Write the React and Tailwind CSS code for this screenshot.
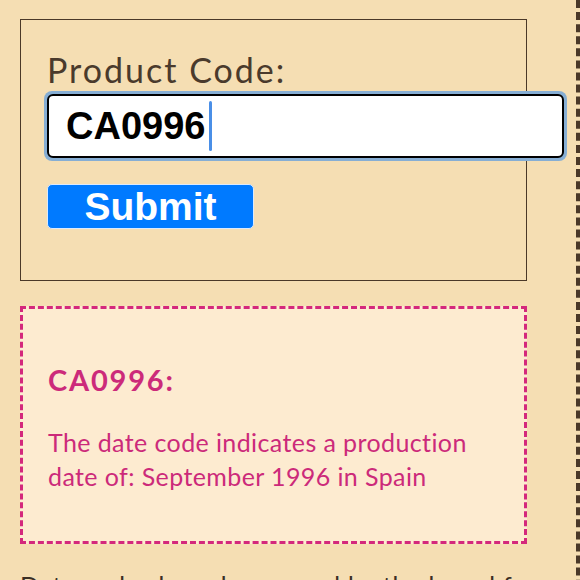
import React, { useState } from 'react';

const App = () => {
  const [code, setCode] = useState('CA0996');

  return (
    <div className="min-h-screen w-[580px] overflow-hidden bg-[#f5deb3] border-r-4 border-dashed border-[#4a3828] pl-5 pt-[19px] font-['Lato',sans-serif]">
      {/* Lookup form */}
      <div className="w-[507px] h-[262px] border border-[#4a3828] pl-[26px] pt-[30px]">
        <label className="block text-[34px] leading-[40px] tracking-[2px] text-[#4a3a2c]">Product Code:</label>
        <div className="relative mt-[1px] -ml-[3px] w-[523px] rounded-[8px] bg-[#86aed4] p-[3px]">
          <input
            value={code}
            onChange={(e) => setCode(e.target.value)}
            className="block w-full h-[64px] rounded-[6px] border-2 border-black bg-white pl-[17px] text-[38px] font-bold text-black outline-none caret-[#3b82f6] font-['Liberation_Sans',Arial,sans-serif]"
          />
          {/* text caret */}
          <span className="pointer-events-none absolute left-[165px] top-[10px] h-[50px] w-[3px] rounded-full bg-[#4a8fe7]" />
        </div>
        <button className="mt-[23px] flex items-center justify-center w-[207px] h-[45px] rounded-[5px] border border-[#dbeafe] bg-[#007aff] text-white text-[39px] font-bold leading-none font-['Liberation_Sans',Arial,sans-serif]">
          Submit
        </button>
      </div>

      {/* Result */}
      <div className="mt-[25px] w-[507px] h-[238px] border-[3px] border-dashed border-[#d4287c] bg-[#fdebd0] pl-[25px] pr-[30px] pt-[54px] text-[#cc2a7a]">
        <h3 className="text-[29px] font-bold leading-[34px] tracking-[1.8px]">CA0996:</h3>
        <p className="mt-[28px] text-[25px] leading-[34px] tracking-[0.4px]">
          The date code indicates a production date of: September 1996 in Spain
        </p>
      </div>

      <p className="mt-[24px] text-[25px] leading-[34px] tracking-[0.8px] text-[#3b2f25]">
        Date codes have been used by the brand for decades
      </p>
    </div>
  );
};

export default App;
